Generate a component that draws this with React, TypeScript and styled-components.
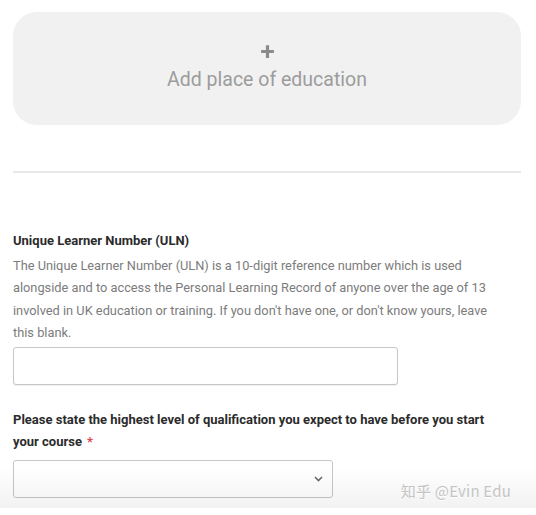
import React from "react";
import styled, { createGlobalStyle } from "styled-components";

const GlobalStyle = createGlobalStyle`
  html, body {
    margin: 0;
    padding: 0;
    background: #ffffff;
  }
  body {
    font-family: Roboto, "Liberation Sans", Arial, sans-serif;
    color: #333333;
  }
`;

const Page = styled.div`
  position: relative;
  width: 536px;
  height: 515px;
  overflow: hidden;
  box-sizing: border-box;
  padding: 12px 15px 0 13px;
`;

const AddCard = styled.button`
  display: flex;
  flex-direction: column;
  align-items: center;
  justify-content: center;
  width: 100%;
  height: 113px;
  border: none;
  border-radius: 24px;
  background: #f1f1f1;
  padding: 0 0 2px;
  cursor: pointer;
  font-family: Roboto, "Liberation Sans", Arial, sans-serif;
`;

const PlusIcon = styled.svg`
  width: 17px;
  height: 17px;
  margin-bottom: 8px;
`;

const AddLabel = styled.span`
  font-size: 19.5px;
  line-height: 24px;
  color: #9c9c9c;
`;

const Divider = styled.hr`
  margin: 46px 0 0;
  border: none;
  height: 2px;
  background: #e8e8e8;
`;

const Field = styled.div<{ $top: number }>`
  display: flex;
  flex-direction: column;
  margin-top: ${(p) => p.$top}px;
`;

const Label = styled.label`
  max-width: 500px;
  font-size: 13px;
  font-weight: 700;
  line-height: 22px;
  color: #2b2b2b;
`;

const Required = styled.span`
  color: #e0474c;
  padding-left: 5px;
`;

const Hint = styled.p`
  max-width: 478px;
  margin: 3px 0 0;
  font-size: 12.8px;
  line-height: 22.3px;
  color: #7c7c7c;
`;

const TextInput = styled.input<{ $width: number; $top: number }>`
  box-sizing: border-box;
  width: ${(p) => p.$width}px;
  height: 38px;
  margin-top: ${(p) => p.$top}px;
  border: 1.5px solid #c6c6c6;
  border-radius: 3px;
  background: #ffffff;
  box-shadow: 0 1px 1px rgba(0, 0, 0, 0.06);
`;

const SelectBox = styled.div<{ $width: number; $top: number }>`
  box-sizing: border-box;
  display: flex;
  align-items: center;
  justify-content: flex-end;
  width: ${(p) => p.$width}px;
  height: 38px;
  margin-top: ${(p) => p.$top}px;
  padding-right: 9px;
  border: 1.5px solid #c6c6c6;
  border-radius: 3px;
  background: #ffffff;
`;

const Chevron = styled.svg`
  width: 9px;
  height: 6px;
`;

// soft shaded strip along the bottom with the site mark on it
const Footer = styled.div`
  position: absolute;
  left: 0;
  right: 0;
  top: 466px;
  height: 42px;
  display: flex;
  align-items: flex-end;
  justify-content: flex-end;
  padding: 0 25px 8px 0;
  box-sizing: border-box;
  background: linear-gradient(
    to bottom,
    rgba(0, 0, 0, 0) 0%,
    rgba(0, 0, 0, 0.05) 100%
  );
  pointer-events: none;
`;

const Mark = styled.span`
  font-family: "Noto Sans CJK SC", "Liberation Sans", sans-serif;
  font-size: 15px;
  line-height: 18px;
  color: #c4c4c4;
  text-shadow: 0 1px 0 #ffffff;
  letter-spacing: 0.2px;
`;

export default function App() {
  return (
    <>
      <GlobalStyle />
      <Page>
        <AddCard type="button">
          <PlusIcon viewBox="0 0 16 16">
            <path d="M8 2v12M2 8h12" stroke="#8a8a8a" strokeWidth="3" />
          </PlusIcon>
          <AddLabel>Add place of education</AddLabel>
        </AddCard>

        <Divider />

        <Field $top={57}>
          <Label>Unique Learner Number (ULN)</Label>
          <Hint>
            The Unique Learner Number (ULN) is a 10-digit reference number which
            is used alongside and to access the Personal Learning Record of
            anyone over the age of 13 involved in UK education or training. If
            you don't have one, or don't know yours, leave this blank.
          </Hint>
          <TextInput $width={385} $top={3} />
        </Field>

        <Field $top={24}>
          <Label>
            Please state the highest level of qualification you expect to have
            before you start your course<Required>*</Required>
          </Label>
          <SelectBox $width={320} $top={7}>
            <Chevron viewBox="0 0 9 6">
              <path
                d="M1 1l3.5 3.5L8 1"
                fill="none"
                stroke="#6a6a6a"
                strokeWidth="1.6"
              />
            </Chevron>
          </SelectBox>
        </Field>

        <Footer>
          <Mark>知乎 @Evin Edu</Mark>
        </Footer>
      </Page>
    </>
  );
}
